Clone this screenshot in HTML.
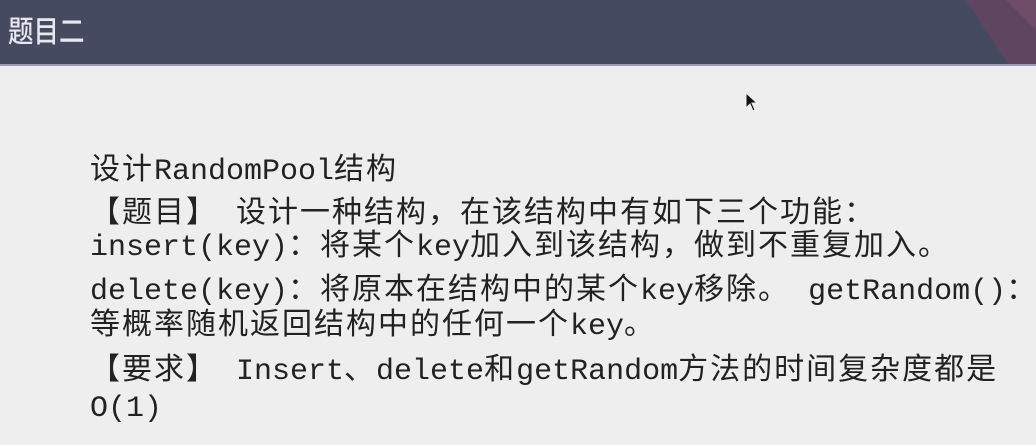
<!DOCTYPE html>
<html><head><meta charset="utf-8"><style>
body{margin:0;width:1036px;height:445px;overflow:hidden;background:#eeeeee;position:relative}
.hdr{position:absolute;left:0;top:0;width:1036px;height:64px;background:#454a60;border-bottom:2px solid #9a9fb5}
.hdr span{position:absolute;left:8px;top:7px;color:#e8e8ee;font:30px "Noto Sans CJK SC",sans-serif;font-weight:500;transform:scaleX(0.85);transform-origin:left}
.l{position:absolute;left:90px;font-family:"Liberation Mono","Noto Sans CJK SC",monospace;font-size:30px;color:#222;white-space:pre;line-height:36px;letter-spacing:2px}
.l i{font-style:normal;letter-spacing:0}
</style></head><body>
<div class="hdr"><span>题目二</span>
<svg width="70" height="64" style="position:absolute;right:0;top:0"><polygon points="0,0 70,0 70,64 42,64" fill="#5e4660"/><polygon points="40,0 70,0 70,30" fill="#6f4d68"/></svg>
</div>
<svg width="14" height="20" style="position:absolute;left:745px;top:92px"><polygon points="1,1 1,16 5,12 8,19 10,18 7,11 12,11" fill="#111" stroke="#eee" stroke-width="1"/></svg>
<div class="l" style="top:154px">设计<i>RandomPool</i>结构</div>
<div class="l" style="top:197px">【题目】<i> </i>设计一种结构，在该结构中有如下三个功能：</div>
<div class="l" style="top:230px"><i>insert(key)</i>：将某个<i>key</i>加入到该结构，做到不重复加入。</div>
<div class="l" style="top:274px"><i>delete(key)</i>：将原本在结构中的某个<i>key</i>移除。<i> getRandom()</i>：</div>
<div class="l" style="top:309px">等概率随机返回结构中的任何一个<i>key</i>。</div>
<div class="l" style="top:354px">【要求】<i> Insert</i>、<i>delete</i>和<i>getRandom</i>方法的时间复杂度都是</div>
<div class="l" style="top:391px"><i>O(1)</i></div>
</body></html>
